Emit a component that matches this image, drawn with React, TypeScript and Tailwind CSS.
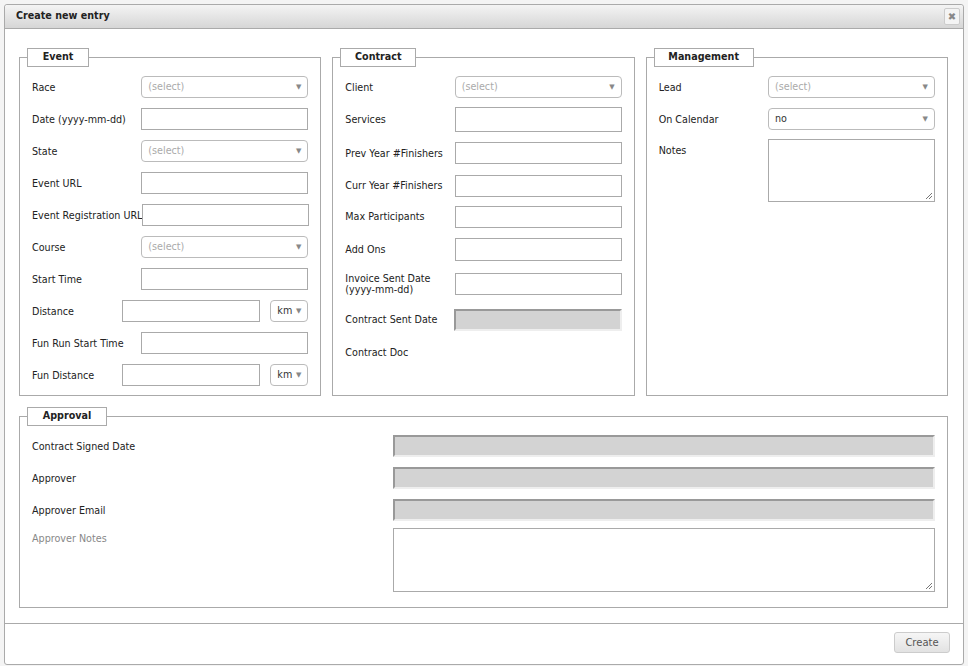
import React from 'react'

const font = { fontFamily: '"DejaVu Sans", Verdana, sans-serif' }

function Select({ value, placeholder, className = '' }: { value?: string; placeholder?: boolean; className?: string }) {
  return (
    <div className={`shrink-0 h-[22px] border border-[#bbb] rounded-[4px] bg-white flex items-center justify-between px-[6px] ${className}`}>
      <span className={placeholder ? 'text-[#aaa]' : 'text-[#333]'}>{value}</span>
      <span className="text-[#888] text-[7px]">▼</span>
    </div>
  )
}

function Input({ className = 'w-[167px]', h = 'h-[22px]' }: { className?: string; h?: string }) {
  return <div className={`shrink-0 ${h} border border-[#aaa] bg-white ${className}`} />
}

function Gray({ className = 'w-[168px]' }: { className?: string }) {
  return <div className={`shrink-0 h-[22px] bg-[#d3d3d3] border-2 border-t-[#999] border-l-[#999] border-b-[#eee] border-r-[#eee] ${className}`} />
}

function Textarea({ className }: { className: string }) {
  return (
    <div className={`shrink-0 relative border border-[#aaa] bg-white ${className}`}>
      <svg className="absolute right-[1px] bottom-[1px]" width="8" height="8" viewBox="0 0 8 8">
        <path d="M7 1L1 7M7 4L4 7" stroke="#777" strokeWidth="1" />
      </svg>
    </div>
  )
}

function Fieldset({ title, lw, className = '', children }: { title: string; lw: string; className?: string; children: React.ReactNode }) {
  return (
    <div className={`relative border border-[#aaa] ${className}`}>
      <div className={`absolute left-[7px] -top-[10px] h-[19px] ${lw} border border-[#aaa] bg-white font-bold text-[#222] flex items-center justify-center`}>
        {title}
      </div>
      {children}
    </div>
  )
}

function Row({ label, h = 'h-[32px]', children }: { label: React.ReactNode; h?: string; children?: React.ReactNode }) {
  return (
    <div className={`flex items-center justify-between ${h}`}>
      <span className="text-[#222] leading-[11px] whitespace-nowrap">{label}</span>
      {children}
    </div>
  )
}

export default function App() {
  return (
    <div className="w-[968px] h-[666px] bg-[#f4f4f4] pt-[4px] pl-[4px] text-[9.6px]" style={font}>
      <div className="w-[960px] h-[661px] bg-white border border-[#aaa] rounded-[3px] flex flex-col">
        <div className="h-[24px] bg-gradient-to-b from-[#f4f4f4] to-[#d6d6d6] border-b border-[#aaa] rounded-t-[3px] flex items-center justify-between pl-[11px] pr-[3px]">
          <span className="font-bold text-[#222]">Create new entry</span>
          <div className="w-[16px] h-[17px] border border-[#ccc] rounded-[2px] bg-[#f4f4f4] flex items-center justify-center text-[#888] text-[10px]">✖</div>
        </div>
        <div className="pl-[14px] pr-[15px] pt-[28px]">
          <div className="grid grid-cols-3 gap-x-[11px] h-[339px]">
            <Fieldset title="Event" lw="w-[62px]" className="pl-[12px] pr-[12px] pt-[13px]">
              <Row label="Race"><Select value="(select)" placeholder className="w-[167px]" /></Row>
              <Row label="Date (yyyy-mm-dd)"><Input /></Row>
              <Row label="State"><Select value="(select)" placeholder className="w-[167px]" /></Row>
              <Row label="Event URL"><Input /></Row>
              <Row label="Event Registration URL"><Input /></Row>
              <Row label="Course"><Select value="(select)" placeholder className="w-[167px]" /></Row>
              <Row label="Start Time"><Input /></Row>
              <Row label="Distance">
                <div className="flex gap-[10px]"><Input className="w-[138px]" /><Select value="km" className="w-[38px]" /></div>
              </Row>
              <Row label="Fun Run Start Time"><Input /></Row>
              <Row label="Fun Distance">
                <div className="flex gap-[10px]"><Input className="w-[138px]" /><Select value="km" className="w-[38px]" /></div>
              </Row>
            </Fieldset>
            <Fieldset title="Contract" lw="w-[76px]" className="pl-[12px] pr-[12px] pt-[13px]">
              <Row label="Client"><Select value="(select)" placeholder className="w-[167px]" /></Row>
              <Row label="Services" h="h-[33px]"><Input h="h-[25px]" /></Row>
              <Row label="Prev Year #Finishers" h="h-[34px]"><Input /></Row>
              <Row label="Curr Year #Finishers" h="h-[31px]"><Input /></Row>
              <Row label="Max Participants" h="h-[31px]"><Input /></Row>
              <Row label="Add Ons" h="h-[34px]"><Input h="h-[23px]" /></Row>
              <Row label={<>Invoice Sent Date<br />(yyyy-mm-dd)</>} h="h-[35px]"><Input /></Row>
              <Row label="Contract Sent Date" h="h-[37px]"><Gray /></Row>
              <Row label="Contract Doc" h="h-[28px]" />
            </Fieldset>
            <Fieldset title="Management" lw="w-[100px]" className="pl-[12px] pr-[12px] pt-[13px]">
              <Row label="Lead"><Select value="(select)" placeholder className="w-[167px]" /></Row>
              <Row label="On Calendar"><Select value="no" className="w-[167px]" /></Row>
              <div className="flex justify-between pt-[4px]">
                <span className="text-[#222] pt-[5px]">Notes</span>
                <Textarea className="w-[167px] h-[63px]" />
              </div>
            </Fieldset>
          </div>
          <Fieldset title="Approval" lw="w-[80px]" className="mt-[20px] h-[192px] pl-[12px] pr-[12px] pt-[13px]">
            <Row label="Contract Signed Date"><Gray className="w-[542px]" /></Row>
            <Row label="Approver"><Gray className="w-[542px]" /></Row>
            <Row label="Approver Email"><Gray className="w-[542px]" /></Row>
            <div className="flex justify-between pt-[2px]">
              <span className="text-[#888] pt-[4px]">Approver Notes</span>
              <Textarea className="w-[542px] h-[64px]" />
            </div>
          </Fieldset>
        </div>
        <div className="mt-[15px] border-t border-[#aaa] flex justify-end pr-[13px] pt-[8px]">
          <div className="w-[56px] h-[21px] border border-[#ccc] rounded-[3px] bg-gradient-to-b from-[#f6f6f6] to-[#e2e2e2] flex items-center justify-center text-[#555] text-[10px]">Create</div>
        </div>
      </div>
    </div>
  )
}
